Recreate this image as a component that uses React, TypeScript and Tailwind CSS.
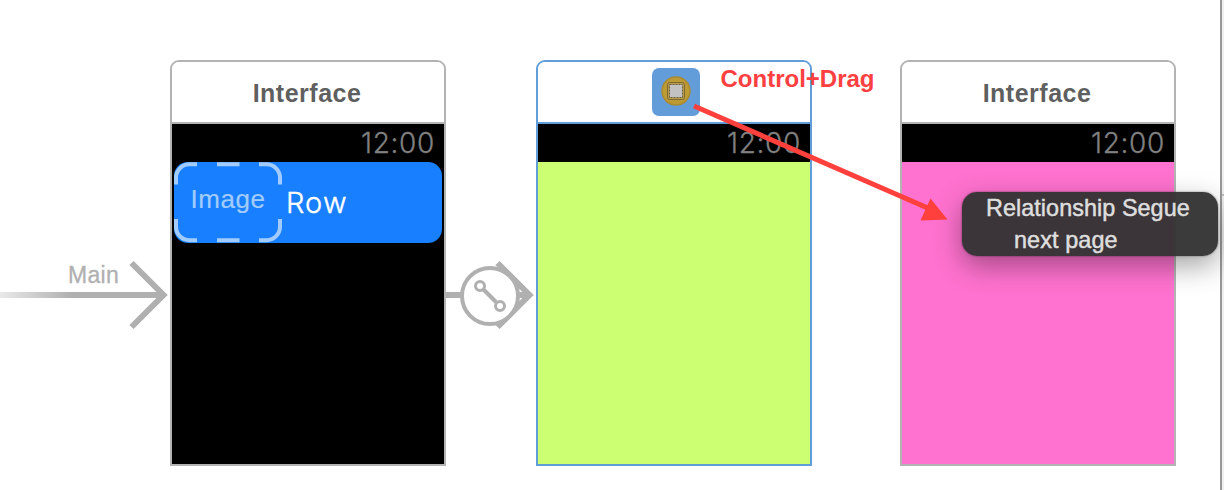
import type { ReactNode } from "react";

type SceneProps = {
  header: ReactNode;
  frame: string;
  divider: string;
  screen: string;
  children?: ReactNode;
};

function Scene({ header, frame, divider, screen, children }: SceneProps) {
  return (
    <section className={`flex h-[406px] w-[276px] shrink-0 flex-col overflow-hidden rounded-t-[9px] border-2 ${frame}`}>
      <header className={`flex h-[62px] shrink-0 items-center justify-center border-b-2 bg-white ${divider}`}>{header}</header>
      <div className="flex h-[38px] shrink-0 items-center justify-end bg-black pr-[9px] font-[Inter,sans-serif] text-[28px] font-light leading-[38px] tracking-[0.65px] text-[#808080] [-webkit-text-stroke:0.3px_#808080]">
        12:00
      </div>
      <div className={`flex-1 ${screen}`}>{children}</div>
    </section>
  );
}

function Title() {
  return <h2 className="pr-[2px] pt-px text-[25px] font-bold leading-[30px] tracking-[0.5px] text-[#5f5f5f]">Interface</h2>;
}

function ControllerIcon() {
  return (
    <div className="ml-1 flex size-12 items-start justify-center rounded-[7px] bg-[#629dd9] pt-2">
      <svg width="30" height="30" viewBox="0 0 30 30" fill="none">
        <circle cx="15" cy="15" r="14" fill="#bc9b35" stroke="#ab8a35" strokeWidth="1.5" />
        <rect x="6.5" y="6.5" width="17" height="17" rx="2" fill="#b79a4c" stroke="#80692f" />
        <rect x="8.500" y="8.500" width="13" height="13" fill="#c2c2c2" stroke="#6d6141" strokeDasharray="2 1" />
      </svg>
    </div>
  );
}

function TableRow() {
  return (
    <div className="mx-[2px] flex h-[81px] items-center rounded-[14px] bg-[#1880fe]">
      <div className="relative flex h-full w-[108px] items-center justify-center">
        <svg className="absolute inset-0" width="108" height="81" viewBox="0 0 108 81" fill="none" stroke="#a2cbff" strokeWidth="4">
          <path d="M2 22.5V16A13.5 13.5 0 0 1 15.5 2.3H23M43 2.3H65.5M85 2.3H92.5A13.5 13.5 0 0 1 106 16V22.5M106 57V64.5A13.5 13.5 0 0 1 92.5 78.2H85M65.5 78.2H43M23 78.2H15.5A13.5 13.5 0 0 1 2 64.5V57" />
        </svg>
        <span className="pb-[7px] text-[26px] leading-[30px] tracking-[0.5px] text-[#a2cbff] [-webkit-text-stroke:0.2px_#a2cbff]">Image</span>
      </div>
      <span className="pl-[4px] font-[Inter,sans-serif] text-[29px] font-[350] leading-[36px] tracking-[1.1px] text-white [-webkit-text-stroke:0.4px_white]">Row</span>
    </div>
  );
}

function EntryPoint() {
  return (
    <div className="flex h-[406px] w-[170px] shrink-0 flex-col pt-[200px]">
      <div className="pl-[68px] text-[23px] leading-[30px] tracking-[0.3px] text-[#b0b0b0] [-webkit-text-stroke:0.3px_#b0b0b0]">Main</div>
      <svg className="-mt-[30px]" width="170" height="70" viewBox="0 0 170 70" fill="none">
        <defs>
          <linearGradient id="entry" gradientUnits="userSpaceOnUse" x1="-28" y1="0" x2="72" y2="0">
            <stop offset="0" stopColor="#fff" />
            <stop offset="1" stopColor="#b0b0b0" />
          </linearGradient>
        </defs>
        <path d="M0 35H163" stroke="url(#entry)" strokeWidth="6" />
        <path d="M131.5 3L163.5 35L131.5 67" stroke="#b0b0b0" strokeWidth="6" />
      </svg>
    </div>
  );
}

function SegueLink() {
  return (
    <svg className="mt-[200px] shrink-0" width="90" height="70" viewBox="0 0 90 70" fill="none" stroke="#b0b0b0">
      <path d="M0 35H83" strokeWidth="6" />
      <path d="M51.5 3L83.5 35L51.5 67" strokeWidth="6" />
      <circle cx="44" cy="36" r="28" fill="white" strokeWidth="4" />
      <path d="M37 29L50 42" strokeWidth="4" />
      <circle cx="34" cy="26" r="4.500" strokeWidth="3" />
      <circle cx="54" cy="46" r="4.500" strokeWidth="3" />
    </svg>
  );
}

export default function App() {
  return (
    <main className="relative flex h-[490px] w-[1224px] overflow-hidden bg-white font-['Liberation_Sans',Arial,sans-serif]">
      <div className="flex w-[1220px] shrink-0 items-start pt-[60px]">
        <EntryPoint />
        <Scene header={<Title />} frame="border-[#b3b3b3]" divider="border-[#b3b3b3]" screen="bg-black">
          <TableRow />
        </Scene>
        <SegueLink />
        <Scene header={<ControllerIcon />} frame="border-[#619dd9]" divider="border-[#619dd9]" screen="bg-[#ccff71]" />
        <div className="w-[88px] shrink-0" />
        <Scene header={<Title />} frame="border-[#b3b3b3]" divider="border-[#b3b3b3]" screen="bg-[#ff72cf]" />
      </div>
      <aside className="w-1 shrink-0 border-l-2 border-[#999] bg-[#efefef] pt-[194px]">
        <div className="h-[2px] bg-[#bdbdbd]" />
      </aside>

      <div className="absolute left-[962px] top-[192px] h-16 w-64 rounded-[15px] bg-[#333333]/96 pl-6 text-[23.4px] leading-8 text-[#dedede] shadow-[0_10px_28px_rgba(0,0,0,0.36),0_0_2px_rgba(0,0,0,0.5)] [-webkit-text-stroke:0.5px_#dedede]">
        <div className="whitespace-nowrap tracking-[0.05px]">Relationship Segue</div>
        <div className="whitespace-nowrap pl-7 tracking-[0.1px]">next page</div>
      </div>

      <span className="absolute left-[720.5px] top-[64px] text-[24px] font-bold leading-[30px] text-[#ff4040]">Control+Drag</span>
      <svg className="absolute left-[690px] top-[98px]" width="262" height="128" viewBox="0 0 262 128" fill="#ff403c">
        <path d="M4 8L240 111" stroke="#ff403c" strokeWidth="5" />
        <path d="M257.500 121.500L240.500 100.500L230.500 122.500Z" />
      </svg>
    </main>
  );
}
